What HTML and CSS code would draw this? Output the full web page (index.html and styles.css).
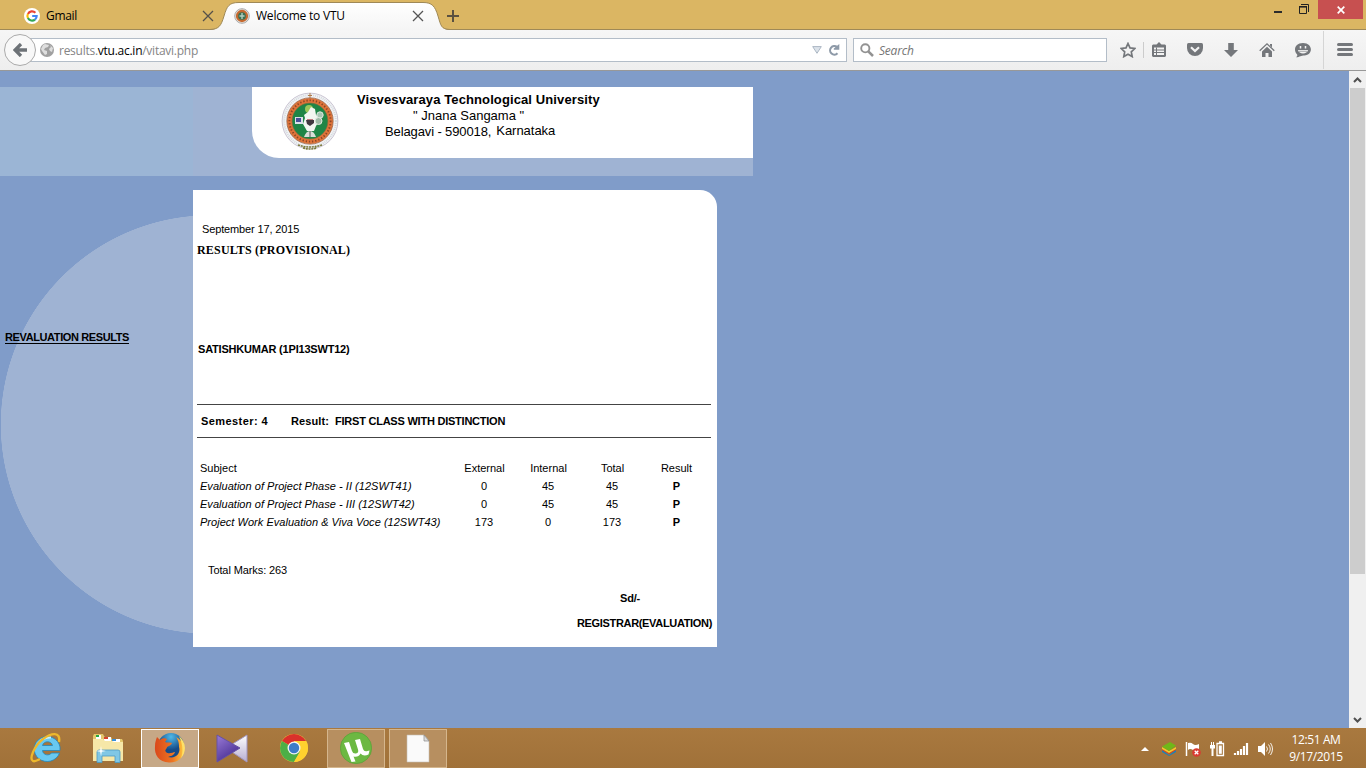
FILE: index.html
```html
<!DOCTYPE html>
<html lang="en">
<head>
<meta charset="utf-8">
<title>Welcome to VTU</title>
<link rel="stylesheet" href="styles.css">
</head>
<body>
<div class="window">
  <header class="tabstrip">
    <div class="tab">
      <svg class="favicon" width="16" height="16" viewBox="0 0 16 16"><circle cx="8" cy="8" r="8" fill="#fff"/><g fill="none" stroke-width="2.1"><path d="M3.9 5.9A4.7 4.7 0 0 1 11.4 4.7" stroke="#ea4335"/><path d="M3.9 10.1A4.7 4.7 0 0 1 3.9 5.9" stroke="#fbbc05"/><path d="M3.9 10.1A4.7 4.7 0 0 0 11 11.6" stroke="#34a853"/><path d="M8.2 8h4.5A4.7 4.7 0 0 1 11 11.6" stroke="#4285f4"/></g></svg>
      <span class="tab-label gmail">Gmail</span>
      <svg class="close" width="12" height="12" viewBox="0 0 12 12"><path d="M1 1l10 10M11 1L1 11" stroke="#555049" stroke-width="1.3"/></svg>
    </div>
    <div class="tab active">
      <svg class="tab-shape" width="240" height="30" viewBox="0 0 240 30"><defs><linearGradient id="tabfill" x2="0" y2="1"><stop stop-color="#fff"/><stop offset="1" stop-color="#f5f5f5"/></linearGradient></defs><path d="M0 30C9 29.500 11 26 14 16C17 6 19 2.500 29 2.500H213C222 2.500 225 6 228 16C231 26 231 29.500 240 30Z" fill="url(#tabfill)"/><path d="M0 29.500C9 29 11 26 14 16C17 6 19 2.500 29 2.500H213C222 2.500 225 6 228 16C231 26 231 29 240 29.500" fill="none" stroke="#9f8957"/></svg>
      <svg class="favicon" width="16" height="16" viewBox="0 0 16 16"><circle cx="8" cy="8" r="7.300" fill="#e8e4df" stroke="#a9a9a9"/><circle cx="8" cy="8" r="5" fill="#397153" stroke="#c5692f" stroke-width="2.300"/><path d="M8 5v6M5.500 8h5" stroke="#b4cdbd" stroke-width="1.400"/></svg>
      <span class="tab-label vtu">Welcome to VTU</span>
      <svg class="close" width="12" height="12" viewBox="0 0 12 12"><path d="M1 1l10 10M11 1L1 11" stroke="#555" stroke-width="1.300"/></svg>
    </div>
    <svg class="newtab" width="12" height="12" viewBox="0 0 12 12"><path d="M6 0v12M0 6h12" stroke="#5b5140" stroke-width="2"/></svg>
    <div class="controls">
      <svg class="mini" width="8" height="2"><path d="M0 0h8v2H0z" fill="#2b2b2b"/></svg>
      <svg class="restore" width="10" height="10" viewBox="0 0 10 10"><path d="M2 .5h7.500V8M.5 2.500h7v7h-7z" fill="none" stroke="#222"/><path d="M0 2h8v1.600H0z" fill="#222"/></svg>
      <div class="shut"><svg width="8" height="8" viewBox="0 0 8 8"><path d="M.7 .7l6.600 6.600M7.300 .7L.7 7.300" stroke="#fff" stroke-width="1.700"/></svg></div>
    </div>
  </header>

  <nav class="navbar">
    <div class="back"><svg width="14" height="14" viewBox="0 0 14 14"><path d="M8 1L2 7l6 6M2 7h12" fill="none" stroke="#6d7277" stroke-width="3.300"/></svg></div>
    <div class="urlbar">
      <svg class="globe" width="14" height="14" viewBox="0 0 14 14"><circle cx="7" cy="7" r="7" fill="#a0a0a0"/><path d="M5 1l4 1-1 2-3 1-1 2 3 1v3l-2 1-3-4L1 6l2-4zM10 2l3 3-1 4-2-1-1-2 2-2z" fill="#dedede"/></svg>
      <span class="url">results.<b>vtu.ac.in</b>/vitavi.php</span>
      <svg class="drop" width="10" height="8" viewBox="0 0 10 8"><path d="M.7 .6h8.600L5 7.300z" fill="#dce3ea" stroke="#acb7c4"/></svg>
      <svg class="reload" width="12" height="12" viewBox="0 0 12 12"><path d="M9.500 9.300A4.300 4.300 0 1 1 9 2.900" fill="none" stroke="#8e9aa8" stroke-width="2.100"/><path d="M5.800 5.800V4.500L11.300 0v5.800z" fill="#8e9aa8"/></svg>
    </div>
    <div class="search">
      <svg width="14" height="14" viewBox="0 0 14 14"><circle cx="5.300" cy="5.300" r="4.100" fill="none" stroke="#929292" stroke-width="1.900"/><path d="M8.300 8.300l4.700 4.700" stroke="#929292" stroke-width="2.500"/></svg>
      <span>Search</span>
    </div>
    <div class="tools">
      <svg width="16" height="16" viewBox="0 0 16 16"><path d="M8 1.500l2 4.400 4.800.6-3.500 3.300.9 4.800L8 12.200l-4.200 2.400.9-4.800L1.200 6.500 6 5.900z" fill="none" stroke="#74777b" stroke-width="1.700"/></svg>
      <i class="rule"></i>
      <svg width="16" height="16" viewBox="0 0 16 16"><path d="M1 3.500L2 2.500h3.500L8 0l2.500 2.500H14l1 1V14l-1 1H2l-1-1z" fill="#74777b"/><path d="M3 5.500h10v7.500H3z" fill="#f3f3f3"/><path d="M3 8h10M3 10.500h10M5.500 5.500V13" stroke="#74777b"/></svg>
      <svg width="16" height="16" viewBox="0 0 16 16"><path d="M1.500 1h13Q16 1 16 2.500V6a8 8 0 0 1-16 0V2.500Q0 1 1.500 1z" fill="#74777b"/><path d="M4 5.200L8 9l4-3.800" fill="none" stroke="#f3f3f3" stroke-width="2.200"/></svg>
      <svg width="16" height="16" viewBox="0 0 16 16"><path d="M5.200 1h5.600v7H15l-7 7-7-7h4.200z" fill="#74777b"/></svg>
      <svg width="16" height="16" viewBox="0 0 16 16"><path d="M.7 8.800L8 1.800l7.300 7" fill="none" stroke="#74777b" stroke-width="1.300"/><path d="M3 9.500l5-4.800 5 4.800V15H9.500v-4h-3v4H3zM11 2h2v3.500l-2-2z" fill="#74777b"/></svg>
      <svg width="16" height="16" viewBox="0 0 16 16"><path d="M8 1c10 0 10.500 12 1.500 12.500C6 13.500 5 15 1 15.300c1.500-1.300 1.500-2 1-3C-2 8 0 1 8 1z" fill="#74777b"/><path d="M5.500 4v2.500M10.500 4v2.500" stroke="#f3f3f3" stroke-width="1.500"/><path d="M3 8h10c-.5 4.500-9.500 4.500-10 0z" fill="#f3f3f3"/><path d="M4 9.300h8" stroke="#74777b" stroke-width=".6"/></svg>
    </div>
    <div class="menu"><svg width="16" height="13" viewBox="0 0 16 13"><path d="M1.500 1.500h13M1.500 6.500h13M1.500 11.500h13" stroke="#74777b" stroke-width="3" stroke-linecap="round"/></svg></div>
  </nav>

  <div class="viewport">
    <main class="page">
      <div class="banner">
        <div class="banner-box">
          <svg class="seal" width="60" height="60" viewBox="0 0 60 60">
            <circle cx="30" cy="30" r="27.900" fill="#f3f2f5" stroke="#b4afc2" stroke-width=".7"/>
            <circle cx="30" cy="30" r="25.800" fill="none" stroke="#d3dcdf" stroke-width="2" stroke-dasharray="1 1"/>
            <circle cx="30" cy="30" r="20.500" fill="#1f8546" stroke="#e0743a" stroke-width="5.200"/>
            <circle cx="30" cy="30" r="23.200" fill="none" stroke="#8b5a3c" stroke-width=".7"/>
            <circle cx="30" cy="30" r="20.600" fill="none" stroke="#8c4526" stroke-width="1.900" stroke-dasharray="1.300 1.900"/>
            <circle cx="30" cy="30" r="18" fill="none" stroke="#8b6a3a" stroke-width=".6"/>
            <circle cx="29" cy="18" r="4" fill="#9bc75a"/>
            <path d="M28 21l3-5 4 2 1 6 5 3-5 8-2 5h-7l-4-7 2-6-1-3z" fill="#f2f6f1"/>
            <path d="M26 29h8v3l-4 3-3-2z" fill="#403740"/><path d="M27 28.500h6" stroke="#c37a83"/>
            <path d="M15 26h8v7h-8z" fill="#dce0ea"/><path d="M16 27h5v4h-5z" fill="#465097"/>
            <circle cx="40" cy="24" r="3.200" fill="#a7c6b4" stroke="#dfe9e1"/><circle cx="38.500" cy="30" r="3.500" fill="#9fbba9" stroke="#e4ebe4"/>
            <path d="M24 46q2-6 6-6t6 6z" fill="#d9ded9"/><path d="M30 40v6" stroke="#555"/>
            <path d="M30 2v5M28 4.500h4" stroke="#af7c4c"/>
            <path d="M18 54q12 4 24 0M23 57q7 2 14 0" fill="none" stroke="#7b7b3c" stroke-width="1.600" stroke-dasharray="2 .8"/>
          </svg>
          <div class="address">
            <b class="uni">Visvesvaraya Technological University</b>
            <span class="motto">" Jnana Sangama "</span>
            <span class="place"><span>Belagavi - 590018,</span><span class="state">Karnataka</span></span>
          </div>
        </div>
      </div>
      <div class="body">
        <aside class="side"><a>REVALUATION RESULTS</a></aside>
        <section class="panel">
          <p class="date">September 17, 2015</p>
          <h1 class="heading">RESULTS (PROVISIONAL)</h1>
          <p class="student">SATISHKUMAR (1PI13SWT12)</p>
          <div class="summary"><span class="sem">Semester: 4</span><span class="res">Result:</span><span class="class">FIRST CLASS WITH DISTINCTION</span></div>
          <div class="marks">
            <span>Subject</span><span>External</span><span>Internal</span><span>Total</span><span>Result</span>
            <i>Evaluation of Project Phase - II (12SWT41)</i><span>0</span><span>45</span><span>45</span><b>P</b>
            <i>Evaluation of Project Phase - III (12SWT42)</i><span>0</span><span>45</span><span>45</span><b>P</b>
            <i>Project Work Evaluation &amp; Viva Voce (12SWT43)</i><span>173</span><span>0</span><span>173</span><b>P</b>
          </div>
          <p class="total">Total Marks: 263</p>
          <p class="signed">Sd/-</p>
          <p class="registrar">REGISTRAR(EVALUATION)</p>
        </section>
      </div>
    </main>
    <div class="scrollbar">
      <svg width="9" height="6" viewBox="0 0 9 6"><path d="M1 5l3.500-3.500L8 5" fill="none" stroke="#505050" stroke-width="2"/></svg>
      <div class="thumb"></div>
      <svg class="down" width="9" height="6" viewBox="0 0 9 6"><path d="M1 1l3.500 3.500L8 1" fill="none" stroke="#505050" stroke-width="2"/></svg>
    </div>
  </div>

  <footer class="taskbar">
    <div class="app">
      <svg width="32" height="32" viewBox="0 0 32 32"><path d="M29.500 21A13 12.500 0 1 1 30 15v3.500H12.500c.5 5 7 5.500 9 2.500z" fill="#68c9f1" stroke="#2186bd" stroke-width=".8"/><path d="M12.500 13.500c1-5 9-5 10 0z" fill="#a4763f" stroke="#2186bd" stroke-width=".8"/><path d="M8 12q4-7 13-6.500" fill="none" stroke="#c5effc" stroke-width="2"/><path d="M29 10C31-1 21 1 13 7C4 14-1 27 3 29c2 1 5-1 7-2" fill="none" stroke="#edb82c" stroke-width="2.400"/></svg>
    </div>
    <div class="app">
      <svg width="32" height="32" viewBox="0 0 32 32"><path d="M1 4l1-2h9l1 2 1 1h6l1 2h10l1 2v20H1z" fill="#e3c66c"/><path d="M4 3h5v4H4zM12 5h7v4h-7zM20 7h8v4h-8z" fill="#fff"/><path d="M4 3h3v2H4z" fill="#22a844"/><path d="M12 5h4v2h-4z" fill="#d7432d"/><path d="M20 7h4v2h-4z" fill="#368fda"/><path d="M1 7h10l2 2h7l2 1h9v19H1z" fill="#f6e7a8"/><path d="M5 30.500V20q0-2 2-2h19q2 0 2 2v10.500h-5V24H10v6.500z" fill="#80c7e5" stroke="#4b9bc3" stroke-width=".8"/><path d="M9 14l.8 4.200L14 19l-4.200.8L9 24l-.8-4.200L4 19l4.200-.8z" fill="#fff"/></svg>
    </div>
    <div class="app current">
      <svg width="32" height="32" viewBox="0 0 32 32"><defs><radialGradient id="sea" cx=".5" cy=".15"><stop stop-color="#4fb9e8"/><stop offset="1" stop-color="#164b88"/></radialGradient><linearGradient id="fur" x2="1" y2="0"><stop stop-color="#da481b"/><stop offset=".6" stop-color="#ec7422"/><stop offset="1" stop-color="#ffc93f"/></linearGradient></defs><circle cx="17" cy="14" r="13" fill="url(#sea)"/><path d="M3 5l3 3c2-2 5-2 7-1l-2 3c2 1 4 0 7 1-1 3-4 3-5 4 0 2-3 3-1 5 3 3 7 0 9 0-1 4-5 4-7 5 8 2 13-4 11-10 0-5-1-7-3-10 7 4 9 9 8 14C29 27 22 31 15 30.500 5 30 0 23 1 14c0-4 1-6 2-9z" fill="url(#fur)"/><path d="M25 4c7 6 8 15 2 22 3-8 1-15-2-22z" fill="#ffe067"/></svg>
    </div>
    <div class="app">
      <svg width="32" height="32" viewBox="0 0 32 32"><defs><linearGradient id="km" x2=".6" y2="1"><stop stop-color="#9a7bd6"/><stop offset="1" stop-color="#442b91"/></linearGradient><linearGradient id="kw" x2="0" y2="1"><stop stop-color="#fff"/><stop offset="1" stop-color="#b7add0"/></linearGradient></defs><path d="M31 3v27L10 16z" fill="url(#kw)" stroke="#a297c2"/><path d="M1 3l23 13L1 30z" fill="url(#km)" stroke="#6652a3"/></svg>
    </div>
    <div class="app">
      <svg width="32" height="32" viewBox="0 0 32 32"><circle cx="16" cy="16" r="14" fill="#ffd23a"/><path d="M16 16L3.900 9A14 14 0 0 1 28.100 9H16z" fill="#da302b"/><path d="M16 16L3.900 9A14 14 0 0 0 16 30l6-10.500z" fill="#4caf46"/><path d="M16 9H28.100A14 14 0 0 1 16 30l6-10z" fill="#ffd12e"/><circle cx="16" cy="16" r="6.500" fill="#f5f5f5"/><circle cx="16" cy="16" r="5.200" fill="#3c7cc9"/></svg>
    </div>
    <div class="app open">
      <svg width="32" height="32" viewBox="0 0 32 32"><circle cx="16" cy="16" r="15.700" fill="#6cb842" stroke="#529d34" stroke-width=".6"/><path d="M4 11l5-1 3 9q1 3 4 2.500t2-4L15 8l5-1 3 10q1 3 4.500 2l2-.5-1 4q-5 2.500-8-1-2 4-7 3l2 5-4 .5z" fill="#fff"/></svg>
    </div>
    <div class="app open">
      <svg width="32" height="32" viewBox="0 0 32 32"><path d="M5 3h17l5 6v21H5z" fill="#fafafa" stroke="#c8c1b7" stroke-width=".6"/><path d="M22 3v6h5z" fill="#ddd" stroke="#888" stroke-width=".7"/></svg>
    </div>
    <div class="tray">
      <svg width="16" height="16" viewBox="0 0 16 16"><path d="M4 10l4-4 4 4z" fill="#fff"/></svg>
      <svg width="16" height="16" viewBox="0 0 16 16"><path d="M1 9l7 5 7-5v2l-7 4-7-4z" fill="#1780bb"/><path d="M1 7l7 5 7-5v2l-7 4-7-4z" fill="#d73d2b"/><path d="M1 6l7 4 7-4v2l-7 4-7-4z" fill="#f2cb28"/><path d="M1 5.500L9 1l6 3.500L8 10z" fill="#70b719"/></svg>
      <svg width="16" height="16" viewBox="0 0 16 16"><path d="M1.500 1v14" stroke="#fff" stroke-width="1.500"/><path d="M3 2q3-1 5 1t6 0v7q-3 1-6-1t-5 0z" fill="#fff"/><circle cx="11.500" cy="11.500" r="4.300" fill="#d93b31"/><path d="M9.700 9.700l3.600 3.600m0-3.600l-3.600 3.600" stroke="#fff" stroke-width="1.300"/></svg>
      <svg width="16" height="16" viewBox="0 0 16 16"><path d="M2.500 1v3M4.500 1v3" stroke="#fff"/><path d="M1 4h5v3.500H4.500V15h-2V7.500H1z" fill="#fff"/><path d="M8 2.500h6.500v12H8zM10 1h3" fill="none" stroke="#fff" stroke-width="1.300"/><path d="M9.800 4.500h3v8.300h-3z" fill="#fff"/></svg>
      <svg width="16" height="16" viewBox="0 0 16 16"><path d="M2 14v-2M5 14v-4M8 14V8M11 14V5M14 14V2" stroke="#fff" stroke-width="2.200"/></svg>
      <svg width="16" height="16" viewBox="0 0 16 16"><path d="M1 5h3l4-4v14l-4-4H1z" fill="#fff"/><path d="M9.500 5.500q2 2.500 0 5M11.500 3.500q3.500 4.500 0 9M13.500 2q4 6 0 12" fill="none" stroke="#fff" stroke-width=".9"/></svg>
    </div>
    <div class="clock"><span>12:51 AM</span><span>9/17/2015</span></div>
  </footer>
</div>
</body>
</html>
```
FILE: styles.css
```css
* { box-sizing: border-box; }
body { margin: 0; overflow: hidden; }
p, h1 { margin: 0; }
svg { display: block; flex: none; }
.window { width: 1366px; height: 768px; display: flex; flex-direction: column; overflow: hidden; font-family: "Open Sans", sans-serif; font-size: 12px; color: #000; }
.window span, .window b, .window i { white-space: nowrap; }

.tabstrip { height: 30px; flex: none; display: flex; background: #dbb663; border-bottom: 1px solid #9f8957; }
.tab { display: flex; align-items: center; width: 210px; height: 30px; padding: 2px 0 0 24px; }
.tab.active { width: 238px; padding-left: 24px; position: relative; }
.tab:first-child .close { margin-right: -4px; }
.tab-shape { position: absolute; left: 0; top: 0; }
.active .favicon, .active .tab-label, .active .close { position: relative; }
.favicon { margin-right: 6px; }
.tab-label { line-height: 16px; }
.gmail { letter-spacing: -.3px; }
.vtu { letter-spacing: -.22px; }
.close { margin-left: auto; }
.active .close { margin-right: 24px; }
.newtab { margin: 10px 0 0 -1px; }
.controls { margin-left: auto; display: flex; align-items: flex-start; }
.mini { margin: 11px 17px 0 0; }
.restore { margin: 4px 9px 0 0; }
.shut { width: 45px; height: 19px; margin-right: 3px; background: #c75050; display: flex; align-items: center; justify-content: center; }

.navbar { height: 41px; flex: none; display: flex; align-items: center; padding-left: 4px; background: linear-gradient(#f6f6f6, #eee); border-bottom: 1px solid #989898; }
.back { width: 32px; height: 32px; border: 1px solid #aaa; border-radius: 50%; background: #f8f8f8; display: flex; align-items: center; justify-content: center; z-index: 1; }
.urlbar { width: 827px; height: 24px; margin-left: -16px; padding-left: 19px; border: 1px solid #b3bdc8; background: #fff; display: flex; align-items: center; }
.url { margin-left: 5px; color: #858585; letter-spacing: -.26px; }
.url b { font-weight: 400; color: #000; }
.drop { margin-left: auto; }
.reload { margin: 0 6px 0 6px; }
.search { width: 254px; height: 24px; margin-left: 6px; padding-left: 6px; border: 1px solid #b3bdc8; background: #fff; display: flex; align-items: center; gap: 5px; color: #757575; font-style: italic; letter-spacing: -.2px; }
.tools { display: flex; align-items: center; gap: 20px; margin-left: 13px; }
.rule { width: 1px; height: 16px; margin: 0 -13px 0 -13px; background: #ccc; }
.menu { height: 38px; margin-left: 12px; padding: 12px 0 0 13px; border-left: 1px solid #d5d5d5; }

.viewport { height: 657px; flex: none; display: flex; }
.page { flex: 1; padding-top: 16px; background: #809cc9; font-family: "Liberation Sans", Arial, sans-serif; font-size: 11px; line-height: 18px; }
.banner { width: 753px; height: 89px; padding-left: 252px; background: linear-gradient(90deg, #9bb5d5 193px, #9fb3d3 193px); }
.banner-box { height: 71px; background: #fff; border-bottom-left-radius: 27px; display: flex; align-items: flex-start; }
.seal { margin: 4px 0 0 28px; }
.address { width: 243px; margin: 5px 0 0 17px; display: flex; flex-direction: column; font-size: 13px; line-height: 16px; }
.uni { letter-spacing: .11px; }
.motto { margin-left: 56px; }
.place { margin-left: 28px; display: flex; gap: 5px; letter-spacing: -.12px; }
.state { margin-top: -1px; letter-spacing: -.03px; }
.body { display: flex; margin-top: 14px; height: 457px; }
.side { width: 193px; padding: 138px 0 0 5px; background: radial-gradient(circle at 210px 234.500px, #9fb3d3 209px, transparent 209.500px); font-weight: bold; letter-spacing: -.39px; }
.side a { text-decoration: underline; text-underline-offset: 2px; }
.panel { width: 524px; padding: 30px 5px 0 4px; background: #fff; border-top-right-radius: 17px; }
.date { padding-left: 5px; letter-spacing: -.14px; }
.heading { margin-top: 3px; font: bold 12px/18px "Liberation Serif", serif; letter-spacing: .19px; }
.student { margin: 81px 0 0 1px; font-weight: bold; letter-spacing: -.2px; }
.summary { display: flex; margin: 46px 1px 0 0; height: 34px; padding: 7px 0 0 4px; border-top: 1px solid #444; border-bottom: 1px solid #444; font-weight: bold; }
.sem { width: 90px; letter-spacing: .42px; }
.res { width: 44px; letter-spacing: .1px; }
.class { letter-spacing: -.23px; }
.marks { display: grid; grid-template-columns: 252px repeat(4, 64px); margin: 21px -5px 0 3px; text-align: center; }
.marks > :nth-child(5n+1) { text-align: left; }
.marks i { letter-spacing: .03px; }
.marks b { padding-left: 1px; }
.marks > :nth-child(-n+5):not(:first-child) { padding-left: 1px; }
.total { margin: 30px 0 0 11px; letter-spacing: -.1px; }
.signed { margin: 10px 0 0 423px; font-weight: bold; letter-spacing: -.2px; }
.registrar { margin-top: 7px; text-align: right; font-weight: bold; letter-spacing: -.33px; white-space: nowrap; }

.scrollbar { width: 17px; padding: 6px 1px 5px; background: #f0f0f0; display: flex; flex-direction: column; align-items: center; }
.thumb { width: 15px; height: 486px; margin-top: 5px; background: #cdcdcd; }
.down { margin-top: auto; }

.taskbar { height: 40px; flex: none; display: flex; align-items: center; padding-left: 17px; background: linear-gradient(#a9793f, #a07139); gap: 4px; }
.app { width: 58px; height: 39px; display: flex; align-items: center; justify-content: center; }
.current { background: #c6a886; border: 1px solid #fff; }
.open { background: #b78f60; border: 1px solid #d5b68d; }
.tray { margin-left: auto; display: flex; gap: 8px; padding-top: 2px; }
.clock { width: 89px; padding-right: 11px; display: flex; flex-direction: column; text-align: center; line-height: 17px; color: #fff; letter-spacing: -.38px; }
```
